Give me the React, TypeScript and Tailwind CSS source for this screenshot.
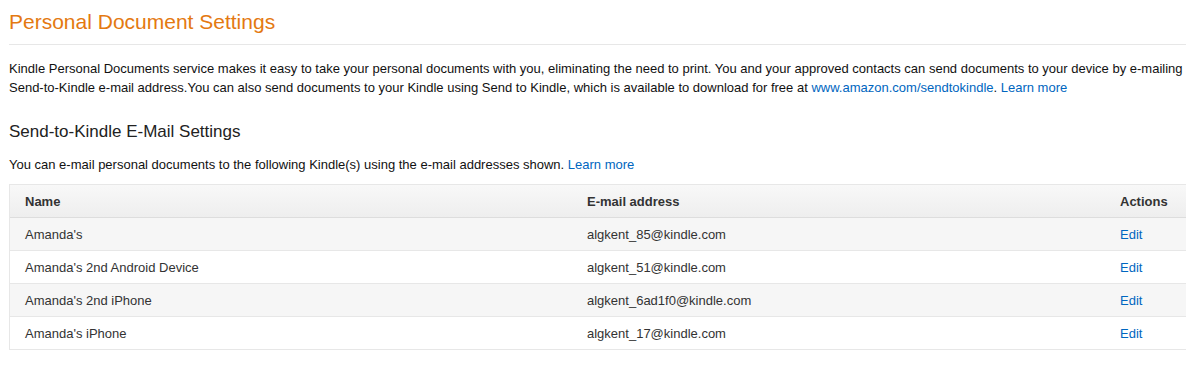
const devices = [
  { name: "Amanda's", email: 'algkent_85@kindle.com' },
  { name: "Amanda's 2nd Android Device", email: 'algkent_51@kindle.com' },
  { name: "Amanda's 2nd iPhone", email: 'algkent_6ad1f0@kindle.com' },
  { name: "Amanda's iPhone", email: 'algkent_17@kindle.com' },
];

export default function App() {
  return (
    <div className="w-[1186px] h-[372px] overflow-hidden bg-white font-['Liberation_Sans',Arial,sans-serif] text-[13px] leading-[19px] text-[#111]">
      <div className="w-[1220px] pl-[9px] pt-[8px]">
        {/* Page title */}
        <h1 className="text-[21px] leading-[28px] text-[#e47911] font-normal">Personal Document Settings</h1>
        <div className="mt-[8px] h-px bg-[#e7e7e7]" />

        <p className="mt-[14px] w-[1182px]">
          Kindle Personal Documents service makes it easy to take your personal documents with you, eliminating the need to print. You and your approved contacts can send documents to your device by e-mailing Send-to-Kindle e-mail address.You can also send documents to your Kindle using Send to Kindle, which is available to download for free at{' '}
          <a className="text-[#0066c0]">www.amazon.com/sendtokindle</a>.{' '}
          <a className="text-[#0066c0]">Learn more</a>
        </p>

        {/* E-mail settings */}
        <h2 className="mt-[23px] text-[17px] leading-[24px] text-[#222] font-normal">Send-to-Kindle E-Mail Settings</h2>
        <p className="mt-[11px]">
          You can e-mail personal documents to the following Kindle(s) using the e-mail addresses shown.{' '}
          <a className="text-[#0066c0]">Learn more</a>
        </p>

        <div className="mt-[10px] border border-[#e7e7e7] text-[#333]">
          <div className="grid grid-cols-[562px_533px_1fr] h-[33px] items-center border-b border-[#dddddd] bg-gradient-to-b from-[#f8f8f8] to-[#eeeeee] font-bold">
            <div className="pl-[15px]">Name</div>
            <div className="pl-[15px]">E-mail address</div>
            <div className="pl-[15px]">Actions</div>
          </div>
          {devices.map((d, i) => (
            <div
              key={d.email}
              className={`grid grid-cols-[562px_533px_1fr] items-center ${
                i < devices.length - 1 ? 'h-[33px] border-b border-[#e7e7e7]' : 'h-[32px]'
              } ${i % 2 === 0 ? 'bg-[#f6f6f6]' : 'bg-white'}`}
            >
              <div className="pl-[15px]">{d.name}</div>
              <div className="pl-[15px]">{d.email}</div>
              <div className="pl-[15px]">
                <a className="text-[#0066c0]">Edit</a>
              </div>
            </div>
          ))}
        </div>
      </div>
    </div>
  );
}
